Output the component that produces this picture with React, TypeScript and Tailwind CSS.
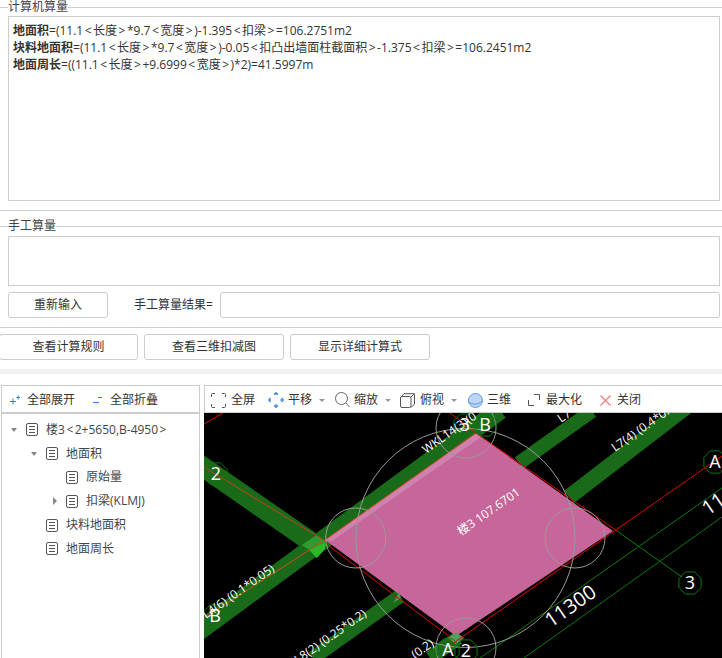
const font = { fontFamily: '"Open Sans", "Noto Sans CJK SC", sans-serif' };

// the angle brackets sit wider in the reference's font than in ours
function Ang({ text }: { text: string }) {
  return (
    <>
      {text.split(/([<>])/).map((part, i) =>
        part === "<" || part === ">" ? (
          <span key={i} className="px-[1.5px]">{part}</span>
        ) : (
          part
        )
      )}
    </>
  );
}

function Legend({ label }: { label: string }) {
  return (
    <div className="flex h-[14px] items-center">
      <div className="h-px w-2 bg-[#ccc]" />
      <span className="text-xs leading-[14px] text-[#444]">{label}</span>
      <div className="h-px flex-1 bg-[#ccc]" />
    </div>
  );
}

function Btn({ label, className }: { label: string; className: string }) {
  return (
    <button className={`h-[26px] rounded-[3px] border border-[#ccc] bg-white text-xs text-[#333] ${className}`}>
      {label}
    </button>
  );
}

function DocIcon() {
  return (
    <svg width="12" height="13" viewBox="0 0 12 13" fill="none" stroke="#555" className="shrink-0">
      <rect x="0.5" y="0.5" width="11" height="12" rx="1.5" />
      <path d="M3 3.5h6M3 6.5h6M3 9.5h6" />
    </svg>
  );
}

function TreeRow({ pad, arrow, label }: { pad: string; arrow?: "down" | "right"; label: string }) {
  return (
    <div className={`flex h-[23.8px] items-center ${pad}`}>
      <div className="flex w-[15px] justify-start">
        {arrow === "down" && <div className="h-0 w-0 border-x-[3px] border-t-[4px] border-x-transparent border-t-[#888]" />}
        {arrow === "right" && <div className="ml-[2px] h-0 w-0 border-y-[4px] border-l-[4px] border-y-transparent border-l-[#888]" />}
      </div>
      <DocIcon />
      <span className="ml-2 whitespace-nowrap text-xs text-[#444]"><Ang text={label} /></span>
    </div>
  );
}

function Caret({ className }: { className: string }) {
  return <div className={`ml-[7px] h-0 w-0 border-x-[3px] border-t-[3px] border-x-transparent border-t-[#999] ${className}`} />;
}

function Toolbar() {
  return (
    <div className="flex h-[27px] items-center border-l border-t border-[#ccc] pl-[6px] pt-[2px] text-xs text-[#333]">
      <svg width="15" height="15" viewBox="0 0 15 15" fill="none" stroke="#555">
        <path d="M0.5 4V1.5a1 1 0 0 1 1-1H4M11 .5h2.5a1 1 0 0 1 1 1V4M14.5 11v2.500a1 1 0 0 1-1 1H11M4 14.500H1.500a1 1 0 0 1-1-1V11" />
      </svg>
      <span className="ml-[5px] mr-[13px]">全屏</span>
      <svg width="16" height="16" viewBox="0 0 16 16" fill="none" stroke="#3b82d6" strokeWidth="1.200">
        <path d="M8 1v3M8 12v3M1 8h3M12 8h3" strokeDasharray="2 1" />
        <path d="M6 2.500 8 .7l2 1.800M6 13.500l2 1.800 2-1.800M2.500 6 .7 8l1.800 2M13.500 6l1.800 2-1.800 2" />
      </svg>
      <span className="ml-1">平移</span>
      <Caret className="mr-[10px]" />
      <svg width="15" height="16" viewBox="0 0 15 16" fill="none" stroke="#666">
        <circle cx="6.500" cy="6.500" r="6" />
        <path d="m11 11 3.500 4" />
      </svg>
      <span className="ml-1">缩放</span>
      <Caret className="mr-[9px]" />
      <svg width="15" height="15" viewBox="0 0 15 15" fill="none" stroke="#555">
        <rect x="0.500" y="3.500" width="10.500" height="11" rx="1.500" />
        <path d="M1 4 4 .7h9.500a1 1 0 0 1 1 1V11l-3.500 3.500M11 4l3.500-3.500" />
      </svg>
      <span className="ml-[5px]">俯视</span>
      <Caret className="mr-[10px]" />
      <svg width="15" height="15" viewBox="0 0 15 15" className="ml-[1px]">
        <circle cx="7.500" cy="7.500" r="7" fill="#bcd6f7" stroke="#5c97e0" />
        <path d="M1 9c3 3 9 3 13-1" fill="none" stroke="#5c97e0" />
      </svg>
      <span className="ml-1 mr-[17px]">三维</span>
      <svg width="12" height="12" viewBox="0 0 12 12" fill="none" stroke="#555">
        <path d="M.5 6v5.500H6M6 .5h5.500V6" />
      </svg>
      <span className="ml-[6px] mr-[18px]">最大化</span>
      <svg width="11" height="11" viewBox="0 0 11 11" fill="none" stroke="#f47a7a" strokeWidth="1.200">
        <path d="m.5.5 10 10M10.500.5l-10 10" />
      </svg>
      <span className="ml-[6px]">关闭</span>
    </div>
  );
}

function Marker({ x, y, label, size = 18 }: { x: number; y: number; label: string; size?: number }) {
  const pts = Array.from({ length: 8 }, (_, i) => {
    const a = ((i + 0.5) * Math.PI) / 4;
    return `${x + 12 * Math.cos(a)},${y + 12 * Math.sin(a)}`;
  }).join(" ");
  return (
    <g>
      <polygon points={pts} fill="none" stroke="#0d7a0d" />
      <text x={x} y={y + size * 0.36} textAnchor="middle" fontSize={size} fill="#fff">{label}</text>
    </g>
  );
}

function Rot({ x, y, size = 12, children }: { x: number; y: number; size?: number; children: string }) {
  return (
    <text x={x} y={y} fontSize={size} fill="#fff" transform={`rotate(-35 ${x} ${y})`}>{children}</text>
  );
}

function CadView() {
  return (
    <svg viewBox="204 413 518 245" className="h-[245px] w-[518px] bg-black" style={font}>
      {/* beams */}
      <g stroke="#196a19" fill="none">
        <path d="M190 458 317 546" strokeWidth="20" />
        <path d="M190 637.500 500 410" strokeWidth="19" />
        <path d="M400 596 313 658" strokeWidth="14" />
        <path d="M519 463 592 411" strokeWidth="14" />
        <path d="M569 497 686 407" strokeWidth="16" />
        <path d="M430 658 458 638" strokeWidth="14" />
      </g>
      <polygon points="301.700,545 316.700,535 326,541.700 309.300,550" fill="#2f9a2f" />
      <polygon points="309.300,550 326,541.700 325,549 316.700,558.300" fill="#2bb82b" />

      <polygon points="325,540 476,433 613,531 456,636" fill="#c7669a" />
      <polygon points="326,540 476,434 481,437 332,541" fill="#cf82ad" />
      <polygon points="395,600 399,592 401,598 393,603" fill="#4f9a4f" />
      <polygon points="448,638 456,632 464,638 456,644" fill="#5e9a5e" />

      {/* axes */}
      <g fill="none" strokeWidth="1">
        <path d="M204 467 325 541" stroke="#c8401c" />
        <path d="M325 543 450 637" stroke="#e00000" />
        <path d="M204 618 325 540 476 433" stroke="#c8501c" />
        <path d="M476 433 450 413M204 424 223 413" stroke="#e00000" />
        <path d="M476 433 617 531" stroke="#e00000" />
        <path d="M452 644 722 456" stroke="#e00000" />
        <path d="M617 531 682 577" stroke="#0d7a0d" />
        <path d="M480 658 722 488M524 658 722 517" stroke="#0d7a0d" />
      </g>

      {/* column circles */}
      <g fill="none" stroke="#999">
        <circle cx="465.500" cy="538" r="109.500" />
        <circle cx="355.700" cy="538" r="30" />
        <circle cx="466" cy="428" r="30" />
        <circle cx="575" cy="538" r="30" />
        <circle cx="466" cy="648" r="30" />
      </g>

      <Marker x={216} y={474} label="2" />
      <Marker x={215} y={616} label="B" />
      <Marker x={465} y={425} label="3" />
      <Marker x={485} y={425} label="B" />
      <Marker x={448} y={650} label="A" />
      <Marker x={466} y={651} label="2" />
      <Marker x={715} y={462} label="A" />
      <Marker x={690} y={583} label="3" />

      <Rot x={426} y={454}>WKL14(3)(0</Rot>
      <Rot x={615} y={452}>L7(4) (0.4*0.4)</Rot>
      <Rot x={561} y={423}>L7</Rot>
      <Rot x={206} y={619}>L4(6) (0.1*0.05)</Rot>
      <Rot x={298} y={664}>L8(2) (0.25*0.2)</Rot>
      <Rot x={415} y={659}>(0.2)</Rot>
      <Rot x={461} y={536}>楼3 107.6701</Rot>
      <Rot x={551} y={628} size={20}>11300</Rot>
      <Rot x={708} y={516} size={20}>11</Rot>
    </svg>
  );
}

export default function App() {
  return (
    <div className="h-[658px] w-[722px] overflow-hidden bg-white" style={font}>
      <Legend label="计算机算量" />
      <div className="ml-2 mr-[2px] mt-[2px] h-[185px] border border-[#ccc] px-1 pt-[5px] text-xs leading-[17px] text-[#333]">
        <p><b>地面积</b>=(11.1<Ang text="<长度>*9.7<宽度>)-1.395<扣梁>=106.2751m2" /></p>
        <p><b>块料地面积</b>=(11.1<Ang text="<长度>*9.7<宽度>)-0.05<扣凸出墙面柱截面积>-1.375<扣梁>=106.2451m2" /></p>
        <p><b>地面周长</b>=((11.1<Ang text="<长度>+9.6999<宽度>)*2)=41.5997m" /></p>
      </div>
      <div className="mt-[9px] h-px bg-[#ccc]" />

      <div className="mt-2">
        <Legend label="手工算量" />
      </div>
      <div className="ml-2 mr-[2px] mt-[3px] h-[50px] border border-[#ccc]" />
      <div className="ml-2 mr-[2px] mt-[6px] flex items-center">
        <Btn label="重新输入" className="w-[100px]" />
        <span className="ml-[26px] w-[86px] text-xs text-[#333]">手工算量结果=</span>
        <div className="h-[26px] flex-1 rounded-[3px] border border-[#ccc]" />
      </div>
      <div className="mt-[9px] h-px bg-[#ccc]" />

      <div className="-ml-px mt-[6px] flex gap-[6px]">
        <Btn label="查看计算规则" className="w-[139px]" />
        <Btn label="查看三维扣减图" className="w-[140px]" />
        <Btn label="显示详细计算式" className="w-[140px]" />
      </div>
      <div className="mt-[9px] h-[5px] bg-[#f0f0f0]" />

      <div className="mt-[11px] flex gap-[4px]">
        <div className="ml-px w-[199px] shrink-0 border-x border-t border-[#ccc]">
          <div className="flex h-[28px] items-center border-b-2 border-[#ccc] pl-2 pt-[2px] text-xs text-[#333]">
            <svg width="10" height="10" viewBox="0 0 10 10" stroke="#2a7de1" fill="none">
              <path d="M0 6.500h6M3 3.500v6M6.500 2.500h3.500M8.200 .5v4" />
            </svg>
            <span className="ml-[7px]">全部展开</span>
            <svg width="9" height="10" viewBox="0 0 9 10" stroke="#2a7de1" fill="none" className="ml-[18px]">
              <path d="M0 7.500h6M5 2.500h4" />
            </svg>
            <span className="ml-2">全部折叠</span>
          </div>
          <div className="h-[233px] pt-1">
            <TreeRow pad="pl-[9px]" arrow="down" label="楼3<2+5650,B-4950>" />
            <TreeRow pad="pl-[29px]" arrow="down" label="地面积" />
            <TreeRow pad="pl-[49px]" label="原始量" />
            <TreeRow pad="pl-[49px]" arrow="right" label="扣梁(KLMJ)" />
            <TreeRow pad="pl-[29px]" label="块料地面积" />
            <TreeRow pad="pl-[29px]" label="地面周长" />
          </div>
        </div>
        <div className="min-w-0 flex-1">
          <Toolbar />
          <div className="h-px bg-[#ccc]" />
          <CadView />
        </div>
      </div>
    </div>
  );
}
